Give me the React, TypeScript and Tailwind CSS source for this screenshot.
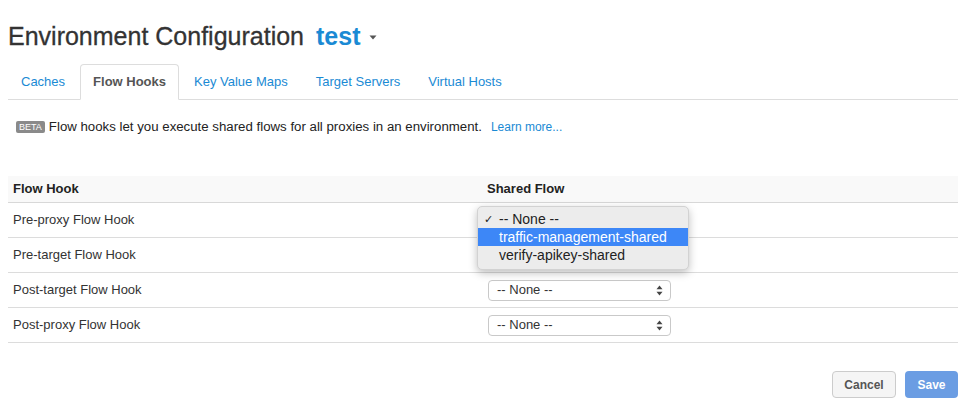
import React from "react";

const Arrows = () => (
  <svg width="7" height="11" viewBox="0 0 7 11" className="shrink-0">
    <path d="M3.5 0.5 L6.5 4.3 L0.5 4.3 Z" fill="#444" />
    <path d="M3.5 10.5 L6.5 6.7 L0.5 6.7 Z" fill="#444" />
  </svg>
);

const Select = ({ hidden }: { hidden?: boolean }) => (
  <div
    className={
      (hidden ? "invisible " : "") +
      "w-[183px] h-[21px] border border-[#c9c9c9] rounded-[4px] bg-white flex items-center justify-between pl-[8px] pr-[7px] text-[13px] text-[#333]"
    }
  >
    <span>-- None --</span>
    <Arrows />
  </div>
);

export default function App() {
  const tabs = ["Caches", "Flow Hooks", "Key Value Maps", "Target Servers", "Virtual Hosts"];
  const rows = ["Pre-proxy Flow Hook", "Pre-target Flow Hook", "Post-target Flow Hook", "Post-proxy Flow Hook"];
  return (
    <div
      className="w-[965px] h-[409px] bg-white pl-[8px] pr-[7px] pt-[23px] text-[#333] overflow-hidden"
      style={{ fontFamily: '"Liberation Sans", Arial, sans-serif' }}
    >
      <div className="flex items-center h-[26px] text-[25px] leading-[26px]">
        <span className="text-[#333] [-webkit-text-stroke:0.3px_#333]">Environment Configuration</span>
        <span className="ml-[12px] font-bold text-[#1a8ad4]">test</span>
        <svg width="8" height="5" viewBox="0 0 8 5" className="ml-[9px] mt-[2px]">
          <path d="M0.5 0.5 L7.5 0.5 L4 4.5 Z" fill="#555" />
        </svg>
      </div>

      <div className="mt-[15px] flex border-b border-[#dddddd] h-[36px] items-end">
        {tabs.map((t) => {
          const active = t === "Flow Hooks";
          return (
            <div
              key={t}
              className={
                active
                  ? "h-[36px] -mb-[1px] mr-[2px] px-[12px] flex items-center text-[13px] font-bold text-[#555] bg-white border border-[#dddddd] border-b-white rounded-t-[4px]"
                  : "h-[35px] mr-[2px] px-[12px] flex items-center text-[13px] text-[#1a8ad4] border border-transparent"
              }
            >
              {t}
            </div>
          );
        })}
      </div>

      <div className="mt-[19px] ml-[8px] flex items-center h-[16px] text-[13.25px]">
        <span className="bg-[#8a8a8a] text-white text-[9px] leading-[12px] px-[3px] rounded-[2px] mr-[4px]">BETA</span>
        <span className="text-[#222]">Flow hooks let you execute shared flows for all proxies in an environment.</span>
        <span className="ml-[9px] text-[12px] text-[#1a8ad4]">Learn more...</span>
      </div>

      <div className="relative mt-[41px]">
        <div className="flex h-[27px] items-center bg-[#f9f9f9] border-b border-[#d8d8d8] text-[13px] font-bold text-[#222]">
          <div className="w-[472px] pl-[5px]">Flow Hook</div>
          <div className="pl-[7px]">Shared Flow</div>
        </div>
        {rows.map((r, i) => (
          <div key={r} className="flex h-[35px] items-center border-b border-[#dcdcdc] text-[13px] text-[#333]">
            <div className="w-[472px] pl-[5px]">{r}</div>
            <div className="pl-[8px]">
              <Select hidden={i < 2} />
            </div>
          </div>
        ))}

        <div className="absolute left-[469px] top-[30px] w-[212px] h-[64px] rounded-[5px] bg-[#ececec] border border-[#d2d2d2] shadow-[0_3px_8px_rgba(0,0,0,0.25)] py-[3px] text-[14px] text-[#222]">
          <div className="h-[18px] flex items-center">
            <span className="w-[21px] pl-[6px] text-[11px]">✓</span>
            <span>-- None --</span>
          </div>
          <div className="h-[18px] flex items-center bg-[#3d87f7] text-white">
            <span className="w-[21px]"></span>
            <span>traffic-management-shared</span>
          </div>
          <div className="h-[18px] flex items-center">
            <span className="w-[21px]"></span>
            <span>verify-apikey-shared</span>
          </div>
        </div>
      </div>

      <div className="mt-[28px] flex justify-end gap-[9px]">
        <div className="h-[27px] w-[64px] rounded-[4px] border border-[#cccccc] bg-[#f5f5f5] flex items-center justify-center text-[12px] font-bold text-[#555]">
          Cancel
        </div>
        <div className="h-[27px] w-[53px] rounded-[4px] bg-[#6b9de3] flex items-center justify-center text-[12px] font-bold text-white">
          Save
        </div>
      </div>
    </div>
  );
}
